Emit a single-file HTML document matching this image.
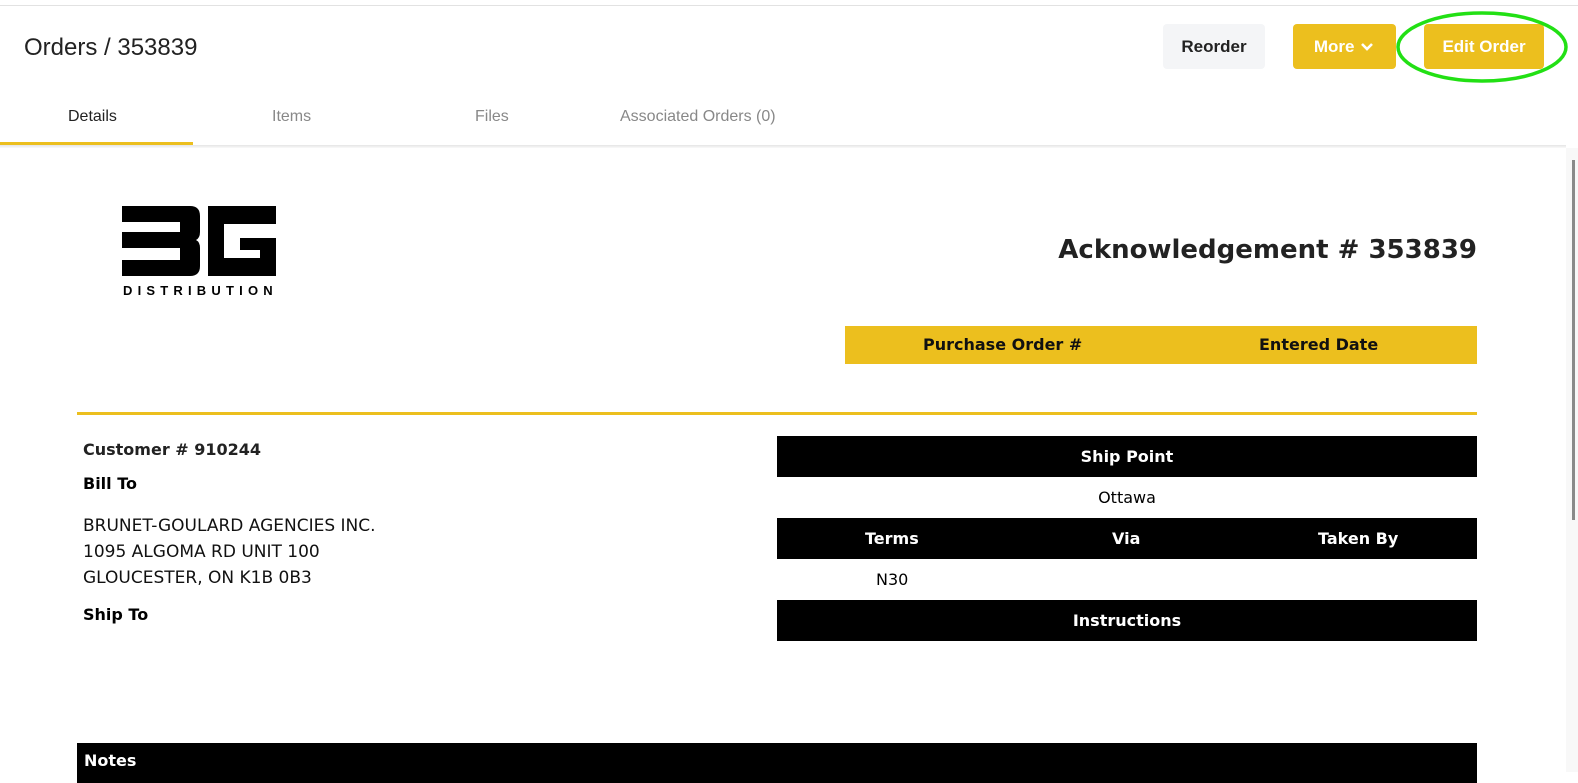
<!DOCTYPE html>
<html><head><meta charset="utf-8"><style>
*{margin:0;padding:0;box-sizing:border-box}
body{width:1578px;height:772px;overflow:hidden;background:#fff;font-family:"Liberation Sans",sans-serif;position:relative}
.a{position:absolute}
.btn{position:absolute;top:24px;height:45px;border-radius:4px;font-size:17px;font-weight:bold;display:flex;align-items:center;justify-content:center}
.tab{position:absolute;top:108px;font-size:16px;color:#888}
.bar{position:absolute;background:#000;color:#fff;font-weight:bold;font-size:17px;height:41px;display:flex;align-items:center}
.m{font-family:"DejaVu Sans","Liberation Sans",sans-serif}
</style></head><body>
<div class="a" style="left:0;top:5px;width:1578px;height:1px;background:#e2e2e2"></div>
<div class="a" style="left:24px;top:34px;font-size:24px;color:#222">Orders / 353839</div>
<div class="btn" style="left:1163px;width:102px;background:#f4f5f7;color:#222">Reorder</div>
<div class="btn" style="left:1293px;width:103px;background:#ecbf1e;color:#fff">More&nbsp;<svg width="16" height="12" viewBox="0 0 16 12"><path d="M3 3l5 5 5-5" stroke="#fff" stroke-width="2.6" fill="none"/></svg></div>
<div class="btn" style="left:1424px;width:120px;background:#ecbf1e;color:#fff">Edit Order</div>
<svg class="a" style="left:1394px;top:8px" width="176" height="78"><ellipse cx="88" cy="39" rx="84" ry="34" fill="none" stroke="#22e014" stroke-width="3.5"/></svg>
<div class="tab" style="left:68px;color:#222">Details</div>
<div class="tab" style="left:272px">Items</div>
<div class="tab" style="left:475px">Files</div>
<div class="tab" style="left:620px">Associated Orders (0)</div>
<div class="a" style="left:0;top:142px;width:193px;height:3px;background:#ecbf1e"></div>
<div class="a" style="left:0;top:145px;width:1566px;height:3px;background:linear-gradient(#e4e4e4,#fafafa)"></div>
<div class="a" style="left:1566px;top:148px;width:12px;height:624px;background:#f8f8f8"></div>
<div class="a" style="left:1572px;top:160px;width:3px;height:360px;background:#8a8a8a"></div>
<svg class="a" style="left:120px;top:204px" width="160" height="95" viewBox="0 0 160 95">
<path d="M2 2H70Q80 2 80 12V28Q80 34 76 36Q80 38 80 44V62Q80 72 70 72H2V56H60V44H2V28H60V18H2Z" fill="#000"/>
<path d="M88 2H156V20H104V54H140V46H120V34H156V72H88Z" fill="#000"/>
<text x="3" y="91" font-family="Liberation Sans" font-weight="bold" font-size="13" letter-spacing="5.2" fill="#000">DISTRIBUTION</text>
</svg>
<div class="a m" style="right:101px;top:235px;font-size:26px;font-weight:bold;color:#222">Acknowledgement # 353839</div>
<div class="a m" style="left:845px;top:326px;width:632px;height:38px;background:#ecbf1e;font-weight:bold;font-size:16px;color:#111">
<span class="a" style="left:78px;top:9px">Purchase Order #</span><span class="a" style="left:414px;top:9px">Entered Date</span></div>
<div class="a" style="left:77px;top:412px;width:1400px;height:3px;background:#ecbf1e"></div>
<div class="a m" style="left:83px;top:440px;font-size:16px;font-weight:bold;color:#222">Customer # 910244</div>
<div class="a m" style="left:83px;top:474px;font-size:16px;font-weight:bold;color:#000">Bill To</div>
<div class="a m" style="left:83px;top:513px;font-size:17px;line-height:26px;color:#111">BRUNET-GOULARD AGENCIES INC.<br>1095 ALGOMA RD UNIT 100<br>GLOUCESTER, ON K1B 0B3</div>
<div class="a m" style="left:83px;top:605px;font-size:16px;font-weight:bold;color:#000">Ship To</div>
<div class="bar m" style="left:777px;top:436px;width:700px;justify-content:center;font-size:16px">Ship Point</div>
<div class="a m" style="left:777px;top:488px;width:700px;text-align:center;font-size:16px">Ottawa</div>
<div class="bar m" style="left:777px;top:518px;width:700px;font-size:16px"><span class="a" style="left:88px">Terms</span><span class="a" style="left:335px">Via</span><span class="a" style="left:541px">Taken By</span></div>
<div class="a m" style="left:876px;top:570px;font-size:16px">N30</div>
<div class="bar m" style="left:777px;top:600px;width:700px;justify-content:center;font-size:16px">Instructions</div>
<div class="bar m" style="left:77px;top:743px;width:1400px;height:40px;font-size:16px;align-items:flex-start;padding:8px 0 0 7px">Notes</div>
</body></html>
